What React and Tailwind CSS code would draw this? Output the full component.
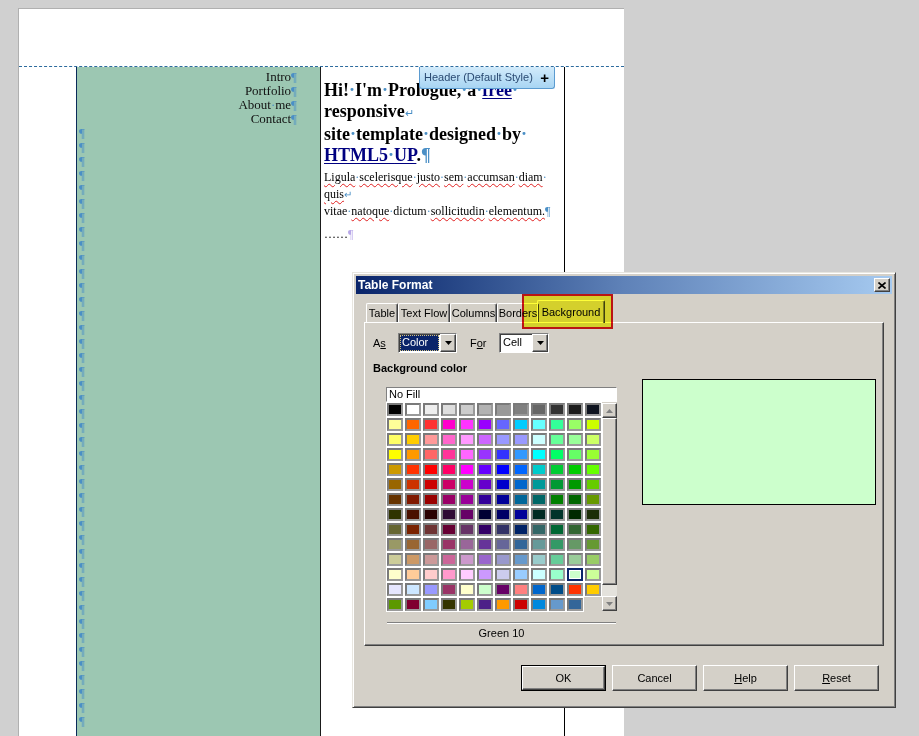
import React from 'react'

const MARK = 'text-[#4a8fc6]'

const palette = [
  ['#000000', '#ffffff', '#eeeeee', '#dddddd', '#cccccc', '#b2b2b2', '#999999', '#808080', '#666666', '#333333', '#1c1c1c', '#0f1420'],
  ['#ffff99', '#ff6600', '#ff3333', '#ff00cc', '#ff33ff', '#9900ff', '#6666ff', '#00ccff', '#66ffff', '#33ff99', '#99ff66', '#ccff00'],
  ['#ffff66', '#ffcc00', '#ff9999', '#ff66cc', '#ff99ff', '#cc66ff', '#9999ff', '#9999ff', '#ccffff', '#66ff99', '#99ff99', '#ccff66'],
  ['#ffff00', '#ff9900', '#ff6666', '#ff3399', '#ff66ff', '#9933ff', '#3333ff', '#3399ff', '#00ffff', '#00ff66', '#66ff66', '#99ff33'],
  ['#cc9900', '#ff3300', '#ff0000', '#ff0066', '#ff00ff', '#6600ff', '#0000ff', '#0066ff', '#00cccc', '#00cc33', '#00cc00', '#66ff00'],
  ['#996600', '#cc3300', '#cc0000', '#cc0066', '#cc00cc', '#6600cc', '#0000cc', '#0066cc', '#009999', '#009933', '#009900', '#66cc00'],
  ['#663300', '#801900', '#990000', '#990066', '#990099', '#330099', '#000099', '#006699', '#006666', '#007f00', '#006600', '#669900'],
  ['#2f3300', '#4a1100', '#2a0000', '#2e0a33', '#660066', '#000033', '#000066', '#000099', '#002a22', '#00332a', '#002a00', '#1c2e08'],
  ['#666633', '#7a2200', '#6e3333', '#660033', '#663366', '#330066', '#333366', '#002266', '#336666', '#006633', '#336633', '#336600'],
  ['#999966', '#996633', '#996666', '#993366', '#996699', '#663399', '#666699', '#336699', '#669999', '#339966', '#669966', '#669933'],
  ['#cccc99', '#cc9966', '#cc9999', '#cc6699', '#cc99cc', '#9966cc', '#9999cc', '#6699cc', '#99cccc', '#66cc99', '#99cc99', '#99cc66'],
  ['#ffffcc', '#ffcc99', '#ffcccc', '#ff99cc', '#ffccff', '#cc99ff', '#ccccee', '#99ccff', '#ccffff', '#99ffcc', '#ccffcc', '#ccff99'],
  ['#e6e6ff', '#cce6ff', '#9999ff', '#993366', '#ffffcc', '#ccffcc', '#660066', '#ff8080', '#0066cc', '#004c88', '#ff3300', '#ffcc00'],
  ['#5c9900', '#800030', '#80ccff', '#333300', '#a4cc00', '#4c2088', '#ff9900', '#cc0000', '#0088dd', '#6699cc', '#336699'],
]

// spaces shown as formatting dots, like the writer's "formatting marks" view
const Dots = ({ text, wavy = [] }) =>
  text.split(' ').map((w, i, arr) => (
    <React.Fragment key={i}>
      <span className={wavy.includes(w) ? 'underline decoration-wavy decoration-[#e02020] decoration-1 underline-offset-2' : ''}>{w}</span>
      {i < arr.length - 1 && <span className={MARK}>·</span>}
    </React.Fragment>
  ))

const Raised = 'border border-t-white border-l-white border-r-[#404040] border-b-[#404040] shadow-[inset_-1px_-1px_#808080]'
const Sunken = 'border border-t-[#808080] border-l-[#808080] border-r-white border-b-white shadow-[inset_1px_1px_#404040]'

const Arrow = ({ down = true, color = '#000' }) => (
  <svg width="7" height="4" viewBox="0 0 7 4">
    {down ? <path d="M0 0h7L3.5 4z" fill={color} /> : <path d="M0 4h7L3.5 0z" fill={color} />}
  </svg>
)

const Combo = ({ value, width, selected }) => (
  <div className={`${Sunken} flex h-[20px] bg-white ${width}`}>
    <div className="flex-1 p-px">
      <div className={`h-full px-[2px] leading-[15px] ${selected ? 'bg-[#0a246a] text-white outline-1 outline-dotted outline-[#d0c080] -outline-offset-1' : ''}`}>{value}</div>
    </div>
    <div className={`${Raised} flex w-[16px] items-center justify-center bg-[#d4d0c8]`}>
      <Arrow />
    </div>
  </div>
)

const Tab = ({ label, width, active }) => (
  <div
    className={`relative flex items-center justify-center rounded-t-[2px] border border-b-0 border-t-white border-l-white border-r-[#404040] shadow-[inset_-1px_0_#808080] ${width} ${active ? 'z-20 -mb-px h-[23px] -mx-[2px]' : 'h-[19px]'}`}
  >
    {label}
  </div>
)

const Button = ({ children, primary }) => (
  <div className={`flex h-[26px] w-[85px] items-center justify-center ${primary ? 'border border-black' : ''}`}>
    <div className={`${Raised} flex h-full w-full items-center justify-center`}>{children}</div>
  </div>
)

export default function App() {
  return (
    <div className="relative h-[736px] w-[919px] overflow-hidden bg-[#d0d0d0] font-['Liberation_Serif',serif]">
      {/* document page */}
      <div className="ml-[18px] pt-[8px]">
        <div className="flex h-[730px] w-[606px] flex-col border-l border-t border-[#b0b0b0] bg-white">
          <div className="h-[58px] shrink-0 border-b border-dashed border-[#2d6b9e]" />
          <div className="flex flex-1">
            <div className="w-[57px]" />
            <div className="w-[245px] overflow-hidden border-l border-r border-l-[#0a2a5a] border-r-[#1a1a1a] bg-[#9cc7b2] pt-[3px] text-[13px] leading-[14px] text-[#111]">
              <div className="pr-[23px] text-right">
                {['Intro', 'Portfolio', 'About me', 'Contact'].map((t) => (
                  <div key={t}>
                    <Dots text={t} />
                    <span className={MARK}>¶</span>
                  </div>
                ))}
              </div>
              <div className="pl-[2px]">
                {Array.from({ length: 43 }).map((_, i) => (
                  <div key={i} className={MARK}>¶</div>
                ))}
              </div>
            </div>
            <div className="w-[244px] border-r border-black pl-[3px] pt-[13px] text-black">
              <div className="text-[18px] font-bold leading-[21px]">
                <div>
                  <Dots text="Hi! I'm Prologue, a" />
                  <span className={MARK}>·</span>
                  <span className="text-[#000080] underline underline-offset-2">free</span>
                  <span className={MARK}>·</span>
                </div>
                <div>
                  responsive<span className={`${MARK} text-[11px] font-normal`}>↵</span>
                </div>
                <div>
                  <Dots text="site template designed by" />
                  <span className={MARK}>·</span>
                </div>
                <div>
                  <span className="text-[#000080] underline underline-offset-2">
                    HTML5<span className={MARK}>·</span>UP
                  </span>
                  .<span className={MARK}>¶</span>
                </div>
              </div>
              <div className="mt-[3px] text-[12px] leading-[17px]">
                <div>
                  <Dots text="Ligula scelerisque justo sem accumsan diam" wavy={['Ligula', 'scelerisque', 'justo', 'sem', 'accumsan', 'diam']} />
                  <span className={MARK}>·</span>
                </div>
                <div>
                  <Dots text="quis" wavy={['quis']} />
                  <span className={`${MARK} text-[10px]`}>↵</span>
                </div>
                <div>
                  <Dots text="vitae natoque dictum sollicitudin elementum." wavy={['natoque', 'sollicitudin', 'elementum.']} />
                  <span className={MARK}>¶</span>
                </div>
              </div>
              <div className="mt-[6px] text-[12px] leading-[17px]">
                ……<span className="text-[#b8a8e8]">¶</span>
              </div>
            </div>
          </div>
        </div>
      </div>

      {/* header tag over the page */}
      <div className="absolute left-[419px] top-[67px] flex h-[22px] w-[136px] items-center justify-between whitespace-nowrap rounded-b-[3px] border border-t-0 border-[#5b9bd0] bg-linear-to-b from-[#d2ebfb] to-[#a8d5f3] pl-[4px] pr-[5px] font-['Liberation_Sans',sans-serif] text-[11px] text-[#2b4a72]">
        <span>Header (Default Style)</span>
        <span className="text-[15px] font-bold leading-none text-black">+</span>
      </div>

      {/* Table Format dialog */}
      <div className="absolute left-[352px] top-[272px] h-[436px] w-[544px] border border-t-[#e8e6e0] border-l-[#e8e6e0] border-r-[#404040] border-b-[#404040] bg-[#d4d0c8] font-['Liberation_Sans',sans-serif] text-[11px] text-black shadow-[inset_1px_1px_white,inset_-1px_-1px_#808080]">
        <div className="mx-[3px] mt-[3px] flex h-[18px] items-center justify-between bg-linear-to-r from-[#0a246a] via-[#5f82b8] to-[#a6caf0] pl-[2px] pr-[2px]">
          <span className="text-[12px] font-bold text-white">Table Format</span>
          <div className={`${Raised} flex h-[14px] w-[16px] items-center justify-center bg-[#d4d0c8]`}>
            <svg width="8" height="7" viewBox="0 0 8 7">
              <path d="M0.5 0.5l7 6M7.5 0.5l-7 6" stroke="#000" strokeWidth="1.6" />
            </svg>
          </div>
        </div>

        <div className="relative pt-[6px]">
          {/* yellow marker round the active tab */}
          <div className="pointer-events-none absolute left-[169px] top-0 z-30 h-[35px] w-[91px] border-2 border-[#e01818] bg-[#ffff38] mix-blend-multiply" />
          <div className="ml-[13px] flex items-end">
            <Tab label="Table" width="w-[32px]" />
            <Tab label="Text Flow" width="w-[52px]" />
            <Tab label="Columns" width="w-[47px]" />
            <Tab label="Borders" width="w-[42px]" />
            <Tab label="Background" width="w-[68px]" active />
          </div>

          <div className="relative z-10 ml-[11px] h-[324px] w-[520px] border border-t-white border-l-white border-r-[#404040] border-b-[#404040] shadow-[inset_-1px_-1px_#808080]">
            <div className="ml-[8px] mt-[10px] flex items-center">
              <span className="w-[25px]">
                A<span className="underline">s</span>
              </span>
              <Combo value="Color" width="w-[59px]" selected />
              <span className="ml-[13px] w-[29px]">
                F<span className="underline">o</span>r
              </span>
              <Combo value="Cell" width="w-[50px]" />
            </div>
            <div className="ml-[8px] mt-[8px] font-bold leading-[14px]">Background color</div>

            <div className="mt-[4px] flex">
              <div className="ml-[21px] w-[231px] pt-[8px]">
                <div className="h-[15px] w-[231px] border border-t-[#808080] border-l-[#808080] border-r-white border-b-white bg-white pl-[2px] leading-[13px]">
                  No Fill
                </div>
                <div className="flex">
                  <div className="grid w-[216px] grid-cols-[repeat(12,16px)] gap-[2px] bg-white p-px">
                    {palette.flatMap((row, r) =>
                      row.map((c, i) => {
                        const sel = r === 11 && i === 10
                        return (
                          <div
                            key={`${r}-${i}`}
                            className={`h-[13px] w-[16px] border-2 ${sel ? 'border-[#0a246a] shadow-[inset_0_0_0_1px_white]' : 'border-t-[#7a7a7a] border-l-[#7a7a7a] border-r-[#9a9a9a] border-b-[#9a9a9a]'}`}
                            style={{ backgroundColor: c }}
                          />
                        )
                      })
                    )}
                    <div className="-m-px h-[15px] w-[18px] bg-[#d4d0c8]" />
                  </div>
                  <div className="mt-px flex h-[208px] w-[15px] flex-col bg-[#e4e2dc]">
                    <div className={`${Raised} flex h-[15px] items-center justify-center bg-[#d4d0c8]`}>
                      <Arrow down={false} color="#808080" />
                    </div>
                    <div className={`${Raised} h-[167px] bg-[#d4d0c8]`} />
                    <div className="flex-1" />
                    <div className={`${Raised} flex h-[15px] items-center justify-center bg-[#d4d0c8]`}>
                      <Arrow color="#808080" />
                    </div>
                  </div>
                </div>
                <div className="ml-px mt-[10px] h-[2px] w-[229px] border-t border-b border-t-[#808080] border-b-white" />
                <div className="mt-[2px] text-center leading-[14px]">Green 10</div>
              </div>
              <div className="ml-[25px] h-[126px] w-[234px] border border-black bg-[#ccffcc]" />
            </div>
          </div>
        </div>

        <div className="mt-[19px] flex justify-end gap-[6px] pr-[16px]">
          <Button primary>OK</Button>
          <Button>Cancel</Button>
          <Button>
            <span className="underline">H</span>elp
          </Button>
          <Button>
            <span className="underline">R</span>eset
          </Button>
        </div>
      </div>
    </div>
  )
}
